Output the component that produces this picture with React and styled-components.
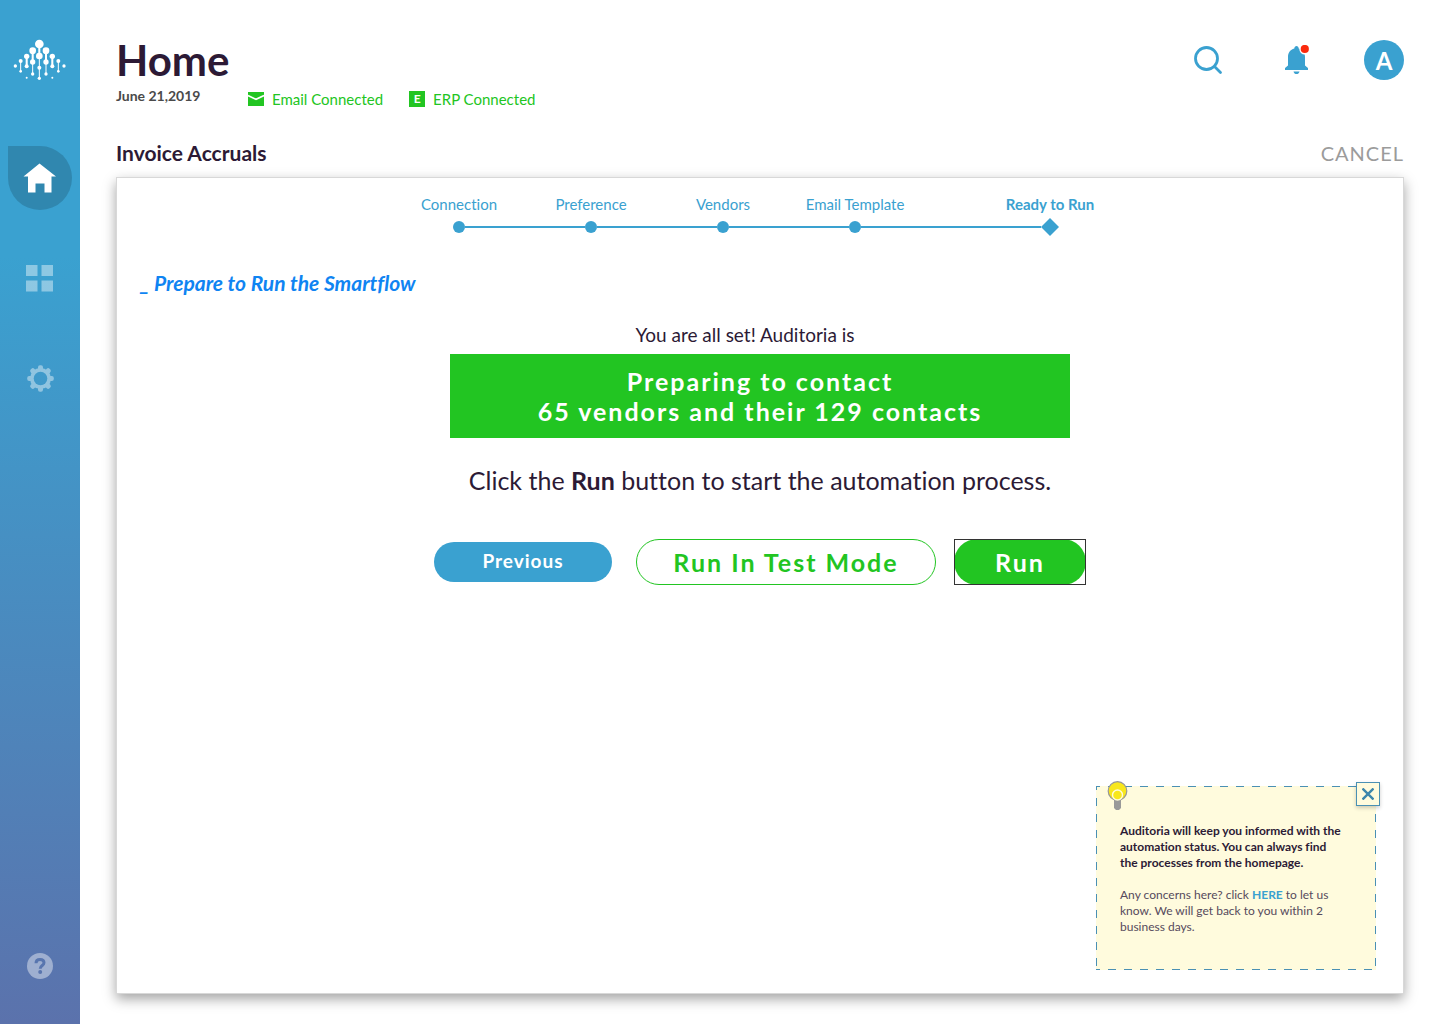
import React from "react";
import styled, { createGlobalStyle, css } from "styled-components";

const blue = "#3aa1d0";
const green = "#22c522";
const ink = "#2c1a35";

const GlobalStyle = createGlobalStyle`
  *, *::before, *::after { box-sizing: border-box; }
  body {
    margin: 0;
    background: #fff;
    color: ${ink};
    font-family: Lato, "Open Sans", sans-serif;
    font-variant-ligatures: no-common-ligatures;
  }
  h1, h2, h3, p, ol { margin: 0; padding: 0; }
  ol { list-style: none; }
  button { font-family: inherit; padding: 0; border: 0; background: none; cursor: pointer; }
  svg { display: block; }
`;

const Page = styled.div`
  display: grid;
  grid-template-columns: 80px 1fr;
  min-height: 100vh;
`;

const Sidebar = styled.aside`
  display: flex;
  flex-direction: column;
  align-items: center;
  padding: 39px 0 45px;
  background: linear-gradient(180deg, ${blue} 0%, ${blue} 25%, #5b72ac 100%);
`;

const Nav = styled.nav`
  display: flex;
  flex-direction: column;
  gap: 36px;
  margin-top: 65px;
`;

const NavLink = styled.a`
  display: flex;
  align-items: center;
  justify-content: center;
  width: 64px;
  height: 64px;
  border-radius: 0 32px 32px 32px;
  color: #fff;
  background: ${(p) => (p.$active ? "#3087af" : "transparent")};

  svg {
    opacity: ${(p) => (p.$active ? 1 : 0.42)};
  }
`;

const HelpButton = styled.button`
  margin-top: auto;
  color: rgba(255, 255, 255, 0.42);
`;

const Main = styled.main`
  display: flex;
  flex-direction: column;
  padding: 40px 36px 30px;
`;

const Header = styled.header`
  display: flex;
  justify-content: space-between;
  align-items: flex-start;
`;

const Title = styled.h1`
  font-size: 42px;
  line-height: 40px;
  font-weight: 700;
`;

const Meta = styled.div`
  display: flex;
  align-items: flex-start;
  gap: 26px;
  margin-top: 8px;
  line-height: 16px;
`;

const DateText = styled.time`
  width: 106px;
  font-size: 14px;
  font-weight: 700;
  color: #4a4a4a;
`;

const Status = styled.span`
  display: flex;
  align-items: center;
  gap: 8px;
  margin-top: 3px;
  font-size: 15px;
  color: ${green};
`;

const ErpBadge = styled.span`
  display: grid;
  place-items: center;
  width: 16px;
  height: 16px;
  background: ${green};
  color: #fff;
  font-size: 12px;
  font-weight: 700;
`;

const Actions = styled.div`
  display: flex;
  gap: 48px;
`;

const IconButton = styled.button`
  display: grid;
  place-items: center;
  width: 40px;
  height: 40px;
  border-radius: 50%;
  color: ${blue};
`;

const Avatar = styled(IconButton)`
  background: ${blue};
  color: #fff;
  font-size: 24px;
  font-weight: 700;
`;

const SectionBar = styled.div`
  display: flex;
  justify-content: space-between;
  align-items: center;
  margin-top: 34px;
  line-height: 24px;
`;

const SectionTitle = styled.h2`
  font-size: 21px;
  font-weight: 700;
`;

const CancelButton = styled.button`
  font-size: 20px;
  line-height: 24px;
  letter-spacing: 1px;
  color: #9b9b9b;
`;

const Card = styled.section`
  display: flex;
  flex: 1;
  flex-direction: column;
  margin-top: 12px;
  padding: 16px 27px 23px 23px;
  border: 1px solid #d8d8d8;
  background: #fff;
  box-shadow: 0 5px 12px rgba(0, 0, 0, 0.36);
`;

const Steps = styled.ol`
  display: grid;
  grid-template-columns: repeat(4, 132px) 206px;
  justify-content: center;
  padding-left: 4px;
  color: ${blue};
`;

const Step = styled.li`
  font-size: 15px;
  line-height: 20px;
  text-align: center;
  font-weight: ${(p) => (p.$current ? 700 : 400)};
`;

const StepLabel = styled.span`
  display: block;
  padding-left: ${(p) => (p.$current ? "52px" : "0")};
`;

const Track = styled.span`
  display: flex;
  align-items: center;
  height: 26px;
`;

const Line = styled.span`
  flex: ${(p) => (p.$end ? "0 0 68px" : "1")};
  height: 2px;
  background: ${(p) => (p.$hidden ? "transparent" : blue)};
`;

const Marker = styled.span`
  width: 12px;
  height: 12px;
  background: ${blue};
  border-radius: 50%;
  ${(p) =>
    p.$current &&
    css`
      width: 18px;
      height: 18px;
      border-radius: 0;
      clip-path: polygon(50% 0, 100% 50%, 50% 100%, 0 50%);
    `}
`;

const Heading = styled.h3`
  margin-top: 31px;
  font-size: 21px;
  line-height: 24px;
  font-style: italic;
  font-weight: 700;
  color: #0f84f2;
`;

const Body = styled.div`
  display: flex;
  flex-direction: column;
  align-items: center;
  padding-left: 4px;
  text-align: center;
`;

const Intro = styled.p`
  margin-top: 28px;
  padding-right: 30px;
  font-size: 19px;
  line-height: 24px;
`;

const Banner = styled.p`
  width: 620px;
  max-width: 100%;
  margin-top: 7px;
  padding: 12px 0;
  background: ${green};
  color: #fff;
  font-size: 25px;
  line-height: 30px;
  font-weight: 700;
  letter-spacing: 2px;
`;

const Prompt = styled.p`
  margin-top: 27px;
  font-size: 25px;
  line-height: 30px;
`;

const Buttons = styled.div`
  display: flex;
  align-items: center;
  gap: 18px;
  margin-top: 44px;
`;

const PillButton = styled.button`
  width: 132px;
  height: 46px;
  border-radius: 24px;
  background: ${green};
  color: #fff;
  font-size: 25px;
  line-height: 30px;
  font-weight: 700;
  letter-spacing: 2px;
`;

const PreviousButton = styled(PillButton)`
  width: 178px;
  height: 40px;
  margin-right: 6px;
  padding-bottom: 2px;
  background: ${blue};
  font-size: 19px;
  letter-spacing: 1px;
`;

const TestButton = styled(PillButton)`
  width: 300px;
  border: 1px solid ${green};
  background: #fff;
  color: ${green};
`;

const RunFrame = styled.div`
  display: flex;
  outline: 1px solid #333;
  outline-offset: -1px;
`;

const dashes = (direction) =>
  `repeating-linear-gradient(${direction}, #4a90b4 0 4px, transparent 4px 12px, #4a90b4 12px 16px)`;

const Tip = styled.aside`
  position: relative;
  align-self: flex-end;
  width: 280px;
  min-height: 184px;
  margin-top: auto;
  padding: 37px 16px 35px 24px;
  background:
    ${dashes("to right")} 0 0 / 100% 1px no-repeat,
    ${dashes("to right")} 0 100% / 100% 1px no-repeat,
    ${dashes("to bottom")} 0 0 / 1px 100% no-repeat,
    ${dashes("to bottom")} 100% 0 / 1px 100% no-repeat,
    #fffbdd;
  font-size: 12px;
  line-height: 16px;
`;

const TipLead = styled.p`
  font-weight: 700;
`;

const TipNote = styled.p`
  margin-top: 16px;
  color: #564a5c;
`;

const TipLink = styled.a`
  color: ${blue};
  font-weight: 700;
  text-decoration: none;
`;

const Bulb = styled.svg`
  position: absolute;
  top: -5px;
  left: 11px;
`;

const CloseButton = styled.button`
  position: absolute;
  top: -4px;
  right: -4px;
  display: grid;
  place-items: center;
  width: 24px;
  height: 24px;
  border: 1px solid #4a90b4;
  background: #fffbdd;
  box-shadow: 0 2px 4px rgba(0, 0, 0, 0.2);
`;

const logoDots = [
  [118, 72, 13], [98, 92, 10], [138, 92, 10], [118, 108, 10],
  [80, 109, 8], [157, 109, 8], [98, 126, 8], [138, 126, 8],
  [62, 123, 6], [175, 123, 6], [80, 139, 6], [157, 139, 6], [118, 143, 6],
  [46, 138, 5], [192, 138, 5], [62, 154, 4], [175, 154, 4],
  [98, 162, 5], [138, 162, 5], [80, 173, 3], [157, 173, 3], [118, 175, 5],
];

const Logo = () => (
  <svg width="54" height="42" viewBox="39 57 162 126" fill="#fff" role="img" aria-label="Auditoria">
    <path
      d="M118 72V175M98 92V162M138 92V162M80 109V139M157 109V139M62 123V154M175 123V154"
      stroke="#fff"
      strokeWidth="3"
    />
    <path d="M118 72V108M98 92V126M138 92V126M80 109V139M157 109V139" stroke="#fff" strokeWidth="6" />
    {logoDots.map(([x, y, r]) => (
      <circle key={`${x}-${y}`} cx={x} cy={y} r={r} />
    ))}
  </svg>
);

const HouseIcon = () => (
  <svg width="34" height="30" viewBox="0 0 34 30" fill="currentColor">
    <path d="M16.5.5 33 13.5h-4.500v16h-7v-9h-9v9H5v-16H.5z" />
  </svg>
);

const TilesIcon = () => (
  <svg width="28" height="28" viewBox="0 0 28 28" fill="currentColor">
    <path d="M0 1h11.500v11H0zM15.500 1H27v11H15.500zM0 16.500h11.500v11H0zM15.500 16.500H27v11H15.500z" />
  </svg>
);

const GearIcon = () => (
  <svg width="28" height="28" viewBox="-14.5 -14.5 28 28" fill="currentColor">
    <mask id="gear-hole">
      <rect x="-15" y="-15" width="30" height="30" fill="#fff" />
      <circle r="6.8" fill="#000" />
    </mask>
    <g mask="url(#gear-hole)">
      <circle r="10.5" />
      {[0, 45, 90, 135].map((angle) => (
        <rect
          key={angle}
          x="-2.5"
          y="-13.3"
          width="5"
          height="26.6"
          rx="2"
          transform={`rotate(${angle})`}
        />
      ))}
    </g>
  </svg>
);

const HelpIcon = () => (
  <svg width="26" height="26" viewBox="0 0 26 26">
    <mask id="help-mark">
      <rect width="26" height="26" fill="#fff" />
      <path d="M9 10.200C9 7.500 10.700 6.500 13 6.500s4 1.200 4 3.300c0 2.700-3.800 2.800-3.800 6" fill="none" stroke="#000" strokeWidth="3" />
      <circle cx="13.2" cy="19" r="2" fill="#000" />
    </mask>
    <circle cx="13" cy="13" r="13" fill="currentColor" mask="url(#help-mark)" />
  </svg>
);

const SearchIcon = () => (
  <svg width="30" height="30" viewBox="0 0 30 30" fill="none" stroke="currentColor" strokeWidth="2.8">
    <circle cx="13.5" cy="13.5" r="11" />
    <path d="m21.500 21.500 6 6" strokeLinecap="round" />
  </svg>
);

const BellIcon = () => (
  <svg width="26" height="30" viewBox="-1 0 26 30" fill="currentColor">
    <path d="M10.300 3.500c0-3.500 4.400-3.500 4.400 0 4 1.300 6.300 4 6.300 8.500V20.500l3 2.500v2H1v-2l3-2.500V12c0-4.500 2.300-7.200 6.300-8.500z" />
    <path d="M9.500 26.500h6c-.6 3.400-5.400 3.400-6 0z" />
    <circle cx="20.8" cy="4" r="5.500" fill="#fff" />
    <circle cx="20.8" cy="4" r="4.1" fill="#fb2a0d" />
  </svg>
);

const MailIcon = () => (
  <svg width="16" height="14" viewBox="0 0 16 14">
    <path d="M0 0h16v14H0z" fill={green} />
    <path d="m0 3.500 8 3.800 8-3.800" fill="none" stroke="#fff" strokeWidth="1.6" />
  </svg>
);

const steps = ["Connection", "Preference", "Vendors", "Email Template", "Ready to Run"];

export default function App() {
  return (
    <>
      <GlobalStyle />
      <Page>
        <Sidebar>
          <Logo />
          <Nav aria-label="Main">
            <NavLink href="#home" aria-label="Home" $active><HouseIcon /></NavLink>
            <NavLink href="#apps" aria-label="Apps"><TilesIcon /></NavLink>
            <NavLink href="#settings" aria-label="Settings"><GearIcon /></NavLink>
          </Nav>
          <HelpButton aria-label="Help"><HelpIcon /></HelpButton>
        </Sidebar>
        <Main>
          <Header>
            <div>
              <Title>Home</Title>
              <Meta>
                <DateText dateTime="2019-06-21">June 21,2019</DateText>
                <Status><MailIcon />Email Connected</Status>
                <Status><ErpBadge>E</ErpBadge>ERP Connected</Status>
              </Meta>
            </div>
            <Actions>
              <IconButton aria-label="Search"><SearchIcon /></IconButton>
              <IconButton aria-label="Notifications"><BellIcon /></IconButton>
              <Avatar>A</Avatar>
            </Actions>
          </Header>
          <SectionBar>
            <SectionTitle>Invoice Accruals</SectionTitle>
            <CancelButton>CANCEL</CancelButton>
          </SectionBar>
          <Card>
            <Steps>
              {steps.map((label, i) => {
                const current = i === steps.length - 1;
                return (
                  <Step key={label} $current={current} aria-current={current ? "step" : undefined}>
                    <StepLabel $current={current}>{label}</StepLabel>
                    <Track>
                      <Line $hidden={i === 0} />
                      <Marker $current={current} />
                      <Line $hidden={current} $end={current} />
                    </Track>
                  </Step>
                );
              })}
            </Steps>
            <Heading>_ Prepare to Run the Smartflow</Heading>
            <Body>
              <Intro>You are all set! Auditoria is</Intro>
              <Banner>
                Preparing to contact
                <br />
                65 vendors and their 129 contacts
              </Banner>
              <Prompt>
                Click the <b>Run</b> button to start the automation process.
              </Prompt>
              <Buttons>
                <PreviousButton>Previous</PreviousButton>
                <TestButton>Run In Test Mode</TestButton>
                <RunFrame>
                  <PillButton>Run</PillButton>
                </RunFrame>
              </Buttons>
            </Body>
            <Tip>
              <Bulb width="21" height="30" viewBox="0 0 21 30">
                <path d="M7 19h7v8l-2 2H9l-2-2z" fill="#999" />
                <circle cx="10.5" cy="10" r="9.3" fill="#f8e71c" stroke="#979797" strokeWidth="1.2" />
                <circle cx="10.5" cy="14" r="5" fill="#f8e71c" stroke="#fffbdd" strokeWidth="1.4" />
              </Bulb>
              <CloseButton aria-label="Close">
                <svg width="12" height="12" viewBox="0 0 12 12" stroke="#3d86ac" strokeWidth="2.4">
                  <path d="m.5.5 11 11M11.500.5l-11 11" />
                </svg>
              </CloseButton>
              <TipLead>
                Auditoria will keep you informed with the
                <br />
                automation status. You can always find
                <br />
                the processes from the homepage.
              </TipLead>
              <TipNote>
                Any concerns here? click <TipLink href="#contact">HERE</TipLink> to let us
                <br />
                know. We will get back to you within 2
                <br />
                business days.
              </TipNote>
            </Tip>
          </Card>
        </Main>
      </Page>
    </>
  );
}
